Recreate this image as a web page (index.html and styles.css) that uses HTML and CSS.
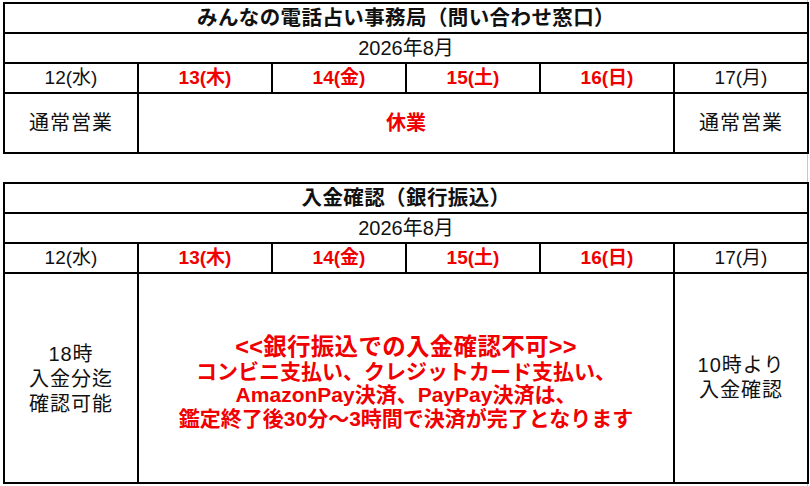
FILE: index.html
```html
<!DOCTYPE html>
<html lang="ja">
<head>
<meta charset="utf-8">
<title>営業日のお知らせ</title>
<link rel="stylesheet" href="styles.css">
</head>
<body>
<div class="page">
  <div class="sheet sheet-a">
    <div class="cell title span6">みんなの電話占い事務局（問い合わせ窓口）</div>
    <div class="cell month span6">2026年8月</div>
    <div class="cell day">12(水)</div>
    <div class="cell day red">13(木)</div>
    <div class="cell day red">14(金)</div>
    <div class="cell day red">15(土)</div>
    <div class="cell day red">16(日)</div>
    <div class="cell day">17(月)</div>
    <div class="cell body spaced">通常営業</div>
    <div class="cell body span4 red closed">休業</div>
    <div class="cell body spaced">通常営業</div>
  </div>

  <div class="sheet sheet-b">
    <div class="cell title span6">入金確認（銀行振込）</div>
    <div class="cell month span6">2026年8月</div>
    <div class="cell day">12(水)</div>
    <div class="cell day red">13(木)</div>
    <div class="cell day red">14(金)</div>
    <div class="cell day red">15(土)</div>
    <div class="cell day red">16(日)</div>
    <div class="cell day">17(月)</div>
    <div class="cell body lines spaced left-note">18時<br>入金分迄<br>確認可能</div>
    <div class="cell body span4 red notice">
      <div class="notice-text">
        <p class="notice-head">&lt;&lt;銀行振込での入金確認不可&gt;&gt;</p>
        <p>コンビニ支払い、クレジットカード支払い、</p>
        <p>AmazonPay決済、PayPay決済は、</p>
        <p>鑑定終了後30分～3時間で決済が完了となります</p>
      </div>
    </div>
    <div class="cell body lines spaced">10時より<br>入金確認</div>
  </div>
</div>
</body>
</html>
```

FILE: styles.css
```css
html, body {
  margin: 0;
  padding: 0;
  background: #fff;
}

body {
  font-family: "Liberation Sans", "Noto Sans CJK JP", sans-serif;
  font-size: 19px;
  color: #111;
}

.page {
  width: 808px;
  min-height: 486px;
  border-right: 1px solid #c8c8c8;
  padding: 2px 0 0 3px;
  box-sizing: border-box;
}

.sheet {
  display: grid;
  grid-template-columns: repeat(6, 132px);
  gap: 2px;
  padding: 2px;
  background: #000;
  width: 806px;
  box-sizing: border-box;
}

.sheet-a {
  grid-template-rows: 28px 28px 28px 58px;
}

.sheet-b {
  margin-top: 28px;
  grid-template-rows: 28px 28px 28px 208px;
}

.cell {
  background: #fff;
  display: flex;
  align-items: center;
  justify-content: center;
  text-align: center;
  line-height: 1.2;
  white-space: nowrap;
}

.span6 { grid-column: span 6; }
.span4 { grid-column: span 4; }

.title {
  font-weight: bold;
  font-size: 20.5px;
  letter-spacing: 0.4px;
}

.month {
  font-size: 20px;
}

.red {
  color: #f00000;
  font-weight: bold;
}

.spaced {
  font-size: 20px;
  letter-spacing: 1px;
}

.closed {
  font-size: 20px;
}

.lines {
  line-height: 25px;
}

.left-note {
  padding-top: 3px;
}

.notice {
  font-size: 21px;
  line-height: 23.5px;
  padding-top: 10px;
}

.notice-text p {
  margin: 0;
}

.notice-text .notice-head {
  font-size: 23.5px;
  letter-spacing: 0.3px;
}
```
